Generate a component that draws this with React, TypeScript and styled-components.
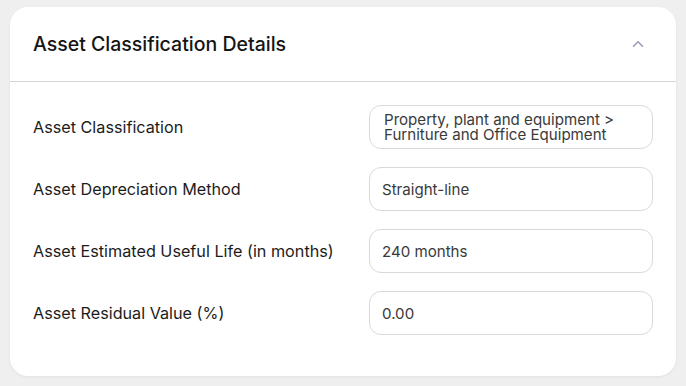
import styled, { createGlobalStyle } from 'styled-components'

const GlobalStyle = createGlobalStyle`
  html, body {
    margin: 0;
    padding: 0;
    background: #efefef;
  }
  body {
    font-family: Inter, "Noto Sans", sans-serif;
  }
`

const Page = styled.div`
  width: 686px;
  height: 386px;
  padding: 7px 10px 10px 10px;
  box-sizing: border-box;
`

const Card = styled.section`
  width: 666px;
  height: 369px;
  background: #ffffff;
  border-radius: 18px;
  box-shadow: 0 1px 3px rgba(0, 0, 0, 0.06);
  box-sizing: border-box;
  overflow: hidden;
`

const Header = styled.header`
  height: 75px;
  display: flex;
  align-items: center;
  justify-content: space-between;
  padding: 0 30px 1px 23px;
  border-bottom: 1px solid #d6d6d6;
  box-sizing: border-box;
`

const Title = styled.h2`
  margin: 0;
  font-size: 19.5px;
  font-weight: 500;
  color: #151515;
`

const Toggle = styled.button`
  border: none;
  background: none;
  padding: 0;
  width: 16px;
  height: 16px;
  display: flex;
  align-items: center;
  justify-content: center;
  cursor: pointer;
`

const Body = styled.div`
  display: grid;
  grid-template-columns: 336px 1fr;
  row-gap: 18px;
  align-items: center;
  padding: 23px 23px 0 23px;
`

const Label = styled.label`
  font-size: 16.2px;
  font-weight: 400;
  color: #1c1c1c;
`

const Field = styled.div<{ $multi?: boolean }>`
  height: 44px;
  border: 1px solid #d9d9d9;
  border-radius: 12px;
  box-sizing: border-box;
  display: flex;
  align-items: center;
  padding: ${(p) => (p.$multi ? '0 14px' : '0 12px')};
  font-size: 15.1px;
  line-height: 15px;
  color: #3a3a3a;
`

const rows = [
  { label: 'Asset Classification', value: 'Property, plant and equipment >\nFurniture and Office Equipment', multi: true },
  { label: 'Asset Depreciation Method', value: 'Straight-line' },
  { label: 'Asset Estimated Useful Life (in months)', value: '240 months' },
  { label: 'Asset Residual Value (%)', value: '0.00' },
]

const FieldText = styled.span`
  white-space: pre-line;
`

const App = () => {
  return (
    <Page>
      <GlobalStyle />
      <Card>
        <Header>
          <Title>Asset Classification Details</Title>
          <Toggle aria-label="Collapse">
            <svg width="12" height="8" viewBox="0 0 12 8" fill="none">
              <path d="M1.5 6.2 L6 1.8 L10.5 6.2" stroke="#9c9cb8" strokeWidth="1.6" strokeLinecap="round" strokeLinejoin="round" />
            </svg>
          </Toggle>
        </Header>
        <Body>
          {rows.map((r) => (
            <>
              <Label key={r.label + '-l'}>{r.label}</Label>
              <Field key={r.label + '-f'} $multi={r.multi}>
                <FieldText>{r.value}</FieldText>
              </Field>
            </>
          ))}
        </Body>
      </Card>
    </Page>
  )
}

export default App
